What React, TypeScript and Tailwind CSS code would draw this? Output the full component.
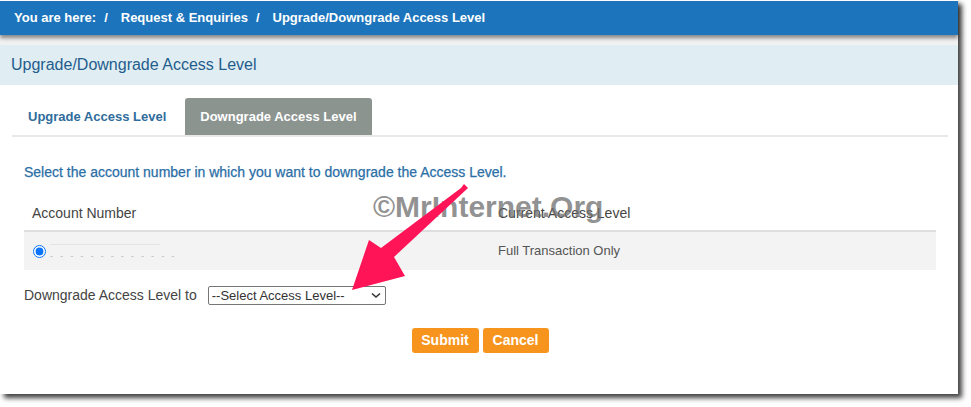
import React from 'react';

const Slash: React.FC = () => <span className="ml-[8px] mr-[13px]">/</span>;

const Breadcrumb: React.FC = () => (
  <div className="relative z-10 flex h-[34px] items-center bg-[#1c75bc] pl-[14px] text-[13px] font-bold text-white shadow-[0_3px_4px_rgba(0,0,0,0.45)]">
    <span>You are here:</span>
    <Slash />
    <span>Request &amp; Enquiries</span>
    <Slash />
    <span>Upgrade/Downgrade Access Level</span>
  </div>
);

const Arrow: React.FC = () => (
  <svg className="pointer-events-none absolute left-0 top-0" width="958" height="394" viewBox="0 0 958 394">
    <polygon
      points="461,188 464,184 468,188 394,257 405,276 352,290 369,240 381,248"
      fill="#ff1458"
    />
  </svg>
);

const App: React.FC = () => {
  return (
    <div className="h-[407px] w-[971px] bg-white" style={{ fontFamily: '"Liberation Sans", Arial, sans-serif' }}>
      <div className="relative h-[394px] w-[958px] bg-white shadow-[4px_4px_5px_rgba(0,0,0,0.75)]">
        <div className="h-px bg-white" />
        <Breadcrumb />
        <div className="h-[10px] bg-[#f1f1f1]" />
        <div className="flex h-[40px] items-center bg-[#e0edf3] pl-[11px] text-[16px] text-[#1f5d8c]">
          Upgrade/Downgrade Access Level
        </div>

        <div className="pl-[12px] pr-[10px] pt-[13px]">
          <div className="flex h-[39px] items-stretch border-b-2 border-[#e8e8e8]">
            <div className="flex items-center pl-[16px] pr-[19px] text-[13px] font-bold text-[#2f6c9c]">Upgrade Access Level</div>
            <div className="flex items-center rounded-t-[3px] bg-[#8c9490] px-[15px] text-[13px] font-bold text-white">
              Downgrade Access Level
            </div>
          </div>

          <div className="px-[12px]">
            <p className="mt-[25px] text-[14px] text-[#2a6ea6] [-webkit-text-stroke:0.25px_#2a6ea6]">
              Select the account number in which you want to downgrade the Access Level.
            </p>

            <div className="mt-[14px] text-[14px]">
              <div className="flex h-[35px] items-center border-b-2 border-[#dedede] text-[#444]">
                <div className="w-[474px] pl-[8px]">Account Number</div>
                <div>Current Access Level</div>
              </div>
              <div className="flex h-[38px] items-center bg-[#f3f3f3] text-[#555]">
                <div className="flex w-[474px] items-center pl-[9px]">
                  <input type="radio" defaultChecked className="m-0 h-[13px] w-[13px] accent-[#0b74ff]" />
                  <div className="ml-[4px] flex flex-col gap-[8px] blur-[0.6px]">
                    <div className="h-px w-[110px] bg-[#e4e4e4]" />
                    <span className="text-[10px] leading-[6px] tracking-[2px] text-[#c4c4c4]">- - - - - - - - - - - - -</span>
                  </div>
                </div>
                <div className="text-[13px]">Full Transaction Only</div>
              </div>
            </div>

            <div className="mt-[15px] flex items-center text-[14px] text-[#444]">
              <span>Downgrade Access Level to</span>
              <div className="ml-[11px] flex h-[19px] w-[178px] items-center justify-between rounded-[2px] border border-[#767676] bg-white pl-[3px] pr-[4px] text-[13px] text-[#333]">
                <span>--Select Access Level--</span>
                <svg width="10" height="7" viewBox="0 0 10 7">
                  <path d="M1 1.5 L5 5 L9 1.5" fill="none" stroke="#333" strokeWidth="1.6" />
                </svg>
              </div>
            </div>

            <div className="mt-[22px] flex justify-center gap-[4px]">
              <button className="h-[25px] w-[67px] rounded-[3px] bg-[#f7941d] text-[14px] font-bold text-white">Submit</button>
              <button className="h-[25px] w-[66px] rounded-[3px] bg-[#f7941d] text-[14px] font-bold text-white">Cancel</button>
            </div>
          </div>
        </div>

        <div className="pointer-events-none absolute left-[373px] top-[192px] text-[30px] font-bold leading-none text-[rgba(110,110,110,0.75)]">
          ©MrInternet.Org
        </div>
        <Arrow />
      </div>
    </div>
  );
};

export default App;
